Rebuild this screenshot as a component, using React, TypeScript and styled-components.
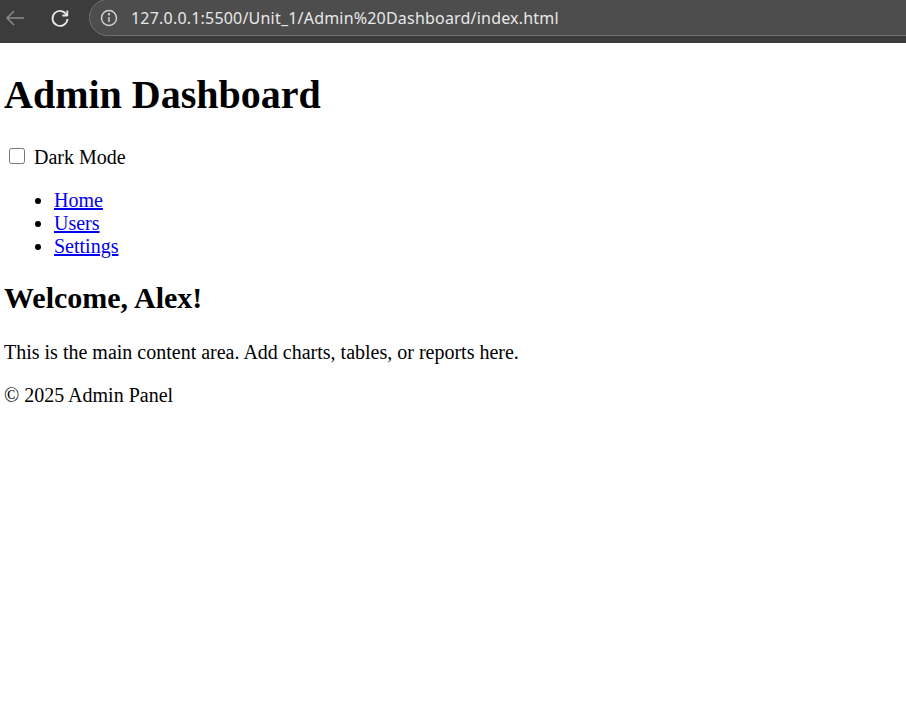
import React from "react";
import styled, { createGlobalStyle } from "styled-components";

const Global = createGlobalStyle`
  html, body { margin: 0; padding: 0; background: #ffffff; }
  body { font-family: "Liberation Serif", "Times New Roman", serif; font-size: 20px; color: #000; }
`;

const TopBar = styled.div`
  height: 43px;
  background: #3c3c3c;
  display: flex;
  align-items: flex-start;
  overflow: hidden;
`;

const NavIcon = styled.div<{ $left: number }>`
  width: 24px;
  height: 24px;
  margin-left: ${(p) => p.$left}px;
  margin-top: 6px;
  display: flex;
  align-items: center;
  justify-content: center;
  flex-shrink: 0;
`;

const UrlPill = styled.div`
  flex: 1;
  height: 37px;
  margin-top: -1px;
  margin-left: 17px;
  margin-right: -40px;
  background: #4d4d4d;
  border: 1px solid #717171;
  border-radius: 19px;
  display: flex;
  align-items: center;
  box-sizing: border-box;
  padding-left: 10px;
`;

const UrlText = styled.span`
  font-family: "Noto Sans", "Open Sans", sans-serif;
  font-size: 16px;
  color: #e8e8e8;
  margin-left: 13px;
  letter-spacing: 0.2px;
  white-space: nowrap;
`;

const Page = styled.div`
  padding: 0 4px;
  display: flow-root;
  background: #fff;
`;

const Title = styled.h1`
  font-size: 40px;
  font-weight: bold;
  margin: 28.8px 0 27.8px;
  line-height: 46px;
`;

const Toggle = styled.label`
  display: flex;
  align-items: center;
  height: 23px;
  line-height: 23px;
`;

const Check = styled.input`
  width: 16px;
  height: 16px;
  margin: 0 9px 3px 5px;
  accent-color: #0075ff;
`;

const Menu = styled.ul`
  margin: 20px 0;
  padding-left: 50px;
  line-height: 23px;
`;

const MenuLink = styled.a`
  color: #0000ee;
  text-decoration: underline;
`;

const Heading = styled.h2`
  font-size: 30px;
  font-weight: bold;
  margin: 23.9px 0 24.9px;
  line-height: 34.5px;
`;

const Para = styled.p`
  margin: 20px 0;
  line-height: 23px;
`;

export default function App() {
  return (
    <>
      <Global />
      <TopBar>
        <NavIcon $left={3}>
          <svg width="22" height="22" viewBox="0 0 22 22" fill="none" stroke="#8a8a8a" strokeWidth="1.5">
            <path d="M20 11H3M10 4l-7 7 7 7" />
          </svg>
        </NavIcon>
        <NavIcon $left={21}>
          <svg width="22" height="22" viewBox="0 0 22 22" fill="none" stroke="#e6e6e6" strokeWidth="1.8">
            <path d="M17.8 8.2A7.5 7.5 0 1 0 18.5 12" />
            <path d="M18.3 3.5v5h-5" strokeLinejoin="round" />
          </svg>
        </NavIcon>
        <UrlPill>
          <svg width="18" height="18" viewBox="0 0 18 18" fill="none" stroke="#d6d6d6" strokeWidth="1.4">
            <circle cx="9" cy="9" r="7.5" />
            <path d="M9 8v5" />
            <circle cx="9" cy="5.3" r="0.5" fill="#d6d6d6" />
          </svg>
          <UrlText>127.0.0.1:5500/Unit_1/Admin%20Dashboard/index.html</UrlText>
        </UrlPill>
      </TopBar>
      <Page>
        <Title>Admin Dashboard</Title>
        <Toggle>
          <Check type="checkbox" />
          Dark Mode
        </Toggle>
        <Menu>
          <li><MenuLink href="#">Home</MenuLink></li>
          <li><MenuLink href="#">Users</MenuLink></li>
          <li><MenuLink href="#">Settings</MenuLink></li>
        </Menu>
        <Heading>Welcome, Alex!</Heading>
        <Para>This is the main content area. Add charts, tables, or reports here.</Para>
        <Para>© 2025 Admin Panel</Para>
      </Page>
    </>
  );
}
